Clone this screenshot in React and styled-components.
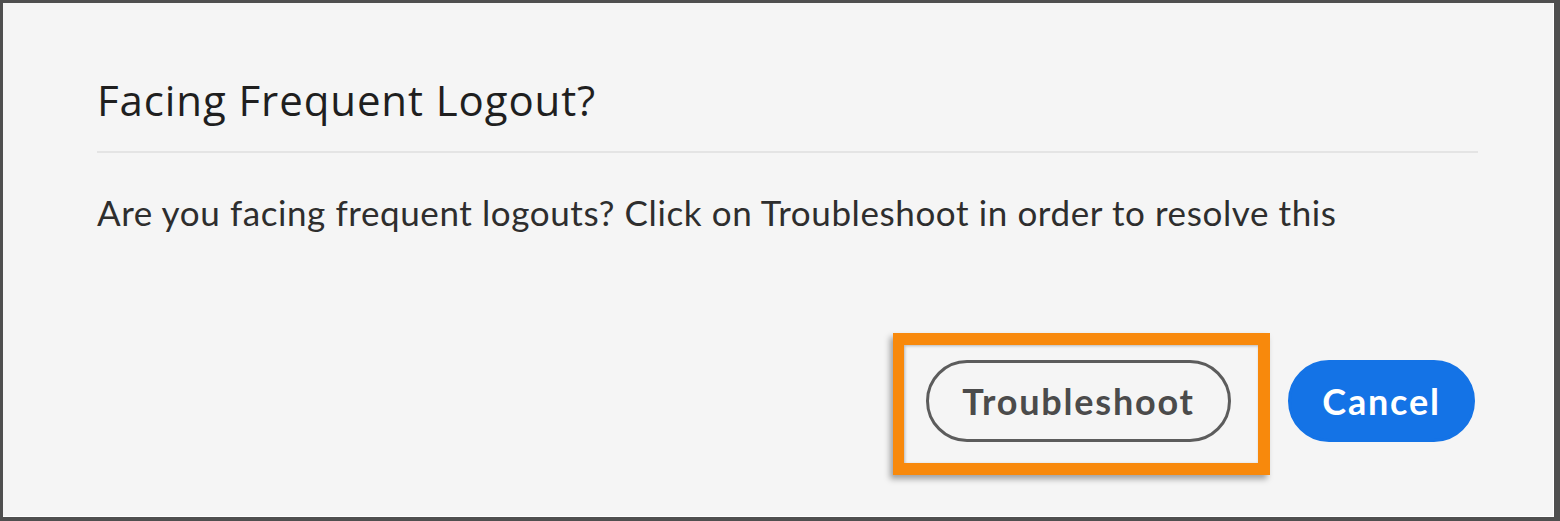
import React from 'react';
import styled, { createGlobalStyle } from 'styled-components';

const GlobalStyle = createGlobalStyle`
  html, body {
    margin: 0;
    padding: 0;
    background: #f5f5f5;
  }
  * {
    box-sizing: border-box;
  }
`;

const Frame = styled.div`
  width: 1560px;
  height: 521px;
  background: #f5f5f5;
  border-style: solid;
  border-color: #4f4f4f;
  border-width: 3px 6px 4px 3px;
  box-shadow: inset -1px -1px 0 #ffffff;
  padding: 73px 76px 0 94px;
  display: flex;
  flex-direction: column;
  font-family: Lato, 'Open Sans', sans-serif;
`;

const Title = styled.h2`
  margin: 0;
  font-family: 'Open Sans', Lato, sans-serif;
  font-size: 42px;
  line-height: 48px;
  font-weight: 400;
  letter-spacing: 0.9px;
  color: #1f1f1f;
`;

const Divider = styled.hr`
  margin: 27px 0 0;
  border: 0;
  height: 2px;
  background: #e4e4e4;
`;

const Message = styled.p`
  margin: 38px 0 0;
  font-size: 35px;
  line-height: 42px;
  letter-spacing: 0.6px;
  color: #2e2e2e;
`;

const Actions = styled.div`
  margin-top: 100px;
  display: flex;
  justify-content: flex-end;
  align-items: flex-start;
  gap: 18px;
  padding-right: 3px;
`;

const Highlight = styled.div`
  border-style: solid;
  border-color: #f8890c;
  border-width: 12px 12px 12px 11px;
  padding: 15px 27px 21px 22px;
  box-shadow: -3px 4px 6px rgba(0, 0, 0, 0.35), inset 1px 1px 3px rgba(0, 0, 0, 0.25);
`;

const Button = styled.button`
  height: 82px;
  padding: 0;
  border-radius: 41px;
  font-family: Lato, 'Open Sans', sans-serif;
  font-weight: 700;
  font-size: 36px;
  letter-spacing: 1.8px;
  cursor: pointer;
  border: 3px solid ${props => (props.primary ? '#1473e6' : '#5c5c5c')};
  background: ${props => (props.primary ? '#1473e6' : '#f5f5f5')};
  color: ${props => (props.primary ? '#ffffff' : '#4b4b4b')};
  width: ${props => props.width}px;
  margin-top: ${props => props.offset || 0}px;
`;

const App = () => {
  return (
    <>
      <GlobalStyle />
      <Frame>
        <Title>Facing Frequent Logout?</Title>
        <Divider />
        <Message>
          Are you facing frequent logouts? Click on Troubleshoot in order to resolve this
        </Message>
        <Actions>
          <Highlight>
            <Button width={305}>Troubleshoot</Button>
          </Highlight>
          <Button primary width={187} offset={27}>
            Cancel
          </Button>
        </Actions>
      </Frame>
    </>
  );
};

export default App;
